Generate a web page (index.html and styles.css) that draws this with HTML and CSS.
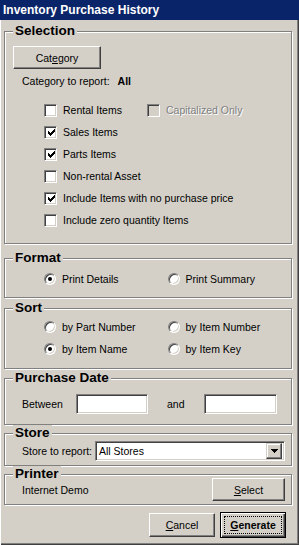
FILE: index.html
```html
<!DOCTYPE html>
<html lang="en">
<head>
  <meta charset="UTF-8" />
  <title>Inventory Purchase History</title>
  <link rel="stylesheet" href="styles.css">
</head>
<body>

  <div class="window">
    <div class="titlebar">Inventory Purchase History</div>

    <div class="content">
      <fieldset class="group group-selection">
        <legend>Selection</legend>
        <button class="btn btn-category">Cat<u>e</u>gory</button>
        <div class="cat-line"><span>Category to report:</span><b>All</b></div>

        <div class="checks">
          <div class="row">
            <span class="chk"></span><span class="lbl lbl-rental">Rental Items</span>
            <span class="chk disabled"></span><span class="lbl lbl-disabled">Capitalized Only</span>
          </div>
          <div class="row">
            <span class="chk"><svg width="7" height="7" viewBox="0 0 7 7"><path d="M0 2V5H1V6H2V7H3V6H4V5H5V4H6V3H7V0H6V1H5V2H4V3H3V4H2V3H1V2Z"/></svg></span><span class="lbl">Sales Items</span>
          </div>
          <div class="row">
            <span class="chk"><svg width="7" height="7" viewBox="0 0 7 7"><path d="M0 2V5H1V6H2V7H3V6H4V5H5V4H6V3H7V0H6V1H5V2H4V3H3V4H2V3H1V2Z"/></svg></span><span class="lbl">Parts Items</span>
          </div>
          <div class="row">
            <span class="chk"></span><span class="lbl">Non-rental Asset</span>
          </div>
          <div class="row">
            <span class="chk"><svg width="7" height="7" viewBox="0 0 7 7"><path d="M0 2V5H1V6H2V7H3V6H4V5H5V4H6V3H7V0H6V1H5V2H4V3H3V4H2V3H1V2Z"/></svg></span><span class="lbl">Include Items with no purchase price</span>
          </div>
          <div class="row">
            <span class="chk"></span><span class="lbl">Include zero quantity Items</span>
          </div>
        </div>
      </fieldset>

      <fieldset class="group group-format">
        <legend>Format</legend>
        <div class="radio-row">
          <div class="radio-cell"><span class="radio on"></span><span class="lbl">Print Details</span></div>
          <div class="radio-cell"><span class="radio"></span><span class="lbl">Print Summary</span></div>
        </div>
      </fieldset>

      <fieldset class="group group-sort">
        <legend>Sort</legend>
        <div class="radio-row">
          <div class="radio-cell"><span class="radio"></span><span class="lbl">by Part Number</span></div>
          <div class="radio-cell"><span class="radio"></span><span class="lbl">by Item Number</span></div>
        </div>
        <div class="radio-row">
          <div class="radio-cell"><span class="radio on"></span><span class="lbl">by Item Name</span></div>
          <div class="radio-cell"><span class="radio"></span><span class="lbl">by Item Key</span></div>
        </div>
      </fieldset>

      <fieldset class="group group-date">
        <legend>Purchase Date</legend>
        <div class="date-row">
          <span class="date-label">Between</span>
          <input type="text" class="field date-from">
          <span class="and-label">and</span>
          <input type="text" class="field date-to">
        </div>
      </fieldset>

      <fieldset class="group group-store">
        <legend>Store</legend>
        <div class="store-row">
          <span class="store-label">Store to report:</span>
          <div class="select">
            <span class="select-text">All Stores</span>
            <span class="select-btn"><svg width="7" height="4" viewBox="0 0 7 4"><path d="M0 0H7V1H6V2H5V3H4V4H3V3H2V2H1V1H0Z"/></svg></span>
          </div>
        </div>
      </fieldset>

      <fieldset class="group group-printer">
        <legend>Printer</legend>
        <div class="printer-row">
          <span>Internet Demo</span>
          <button class="btn btn-select"><u>S</u>elect</button>
        </div>
      </fieldset>

      <div class="footer">
        <button class="btn btn-cancel"><u>C</u>ancel</button>
        <button class="btn btn-generate"><u>G</u>enerate</button>
      </div>
    </div>
  </div>

</body>
</html>
```

FILE: styles.css
```css
:root {
  --face: #d4d0c8;
  --shadow: #808080;
  --dark: #404040;
  --light: #fff;
}

* {
  box-sizing: border-box;
}

body {
  margin: 0;
  background: var(--face);
  font-family: "Liberation Sans", Arial, sans-serif;
  font-size: 10.5px;
  color: #000;
}

.window {
  width: 299px;
  height: 545px;
  box-shadow: inset 1px 0 0 var(--light), inset -1px -1px 0 var(--dark), inset -2px -2px 0 var(--shadow);
}

.titlebar {
  height: 20px;
  line-height: 20px;
  padding-left: 3px;
  background: #0a246a;
  color: #fff;
  font-weight: bold;
  font-size: 12px;
}

.content {
  padding: 3px 0 0 4px;
}

/* group boxes */
.group {
  width: 288px;
  margin: 0;
  padding: 0;
  min-inline-size: 0;
  border: 1px solid var(--shadow);
  box-shadow: 1px 1px 0 var(--light), inset 1px 1px 0 var(--light);
}

.group legend {
  margin-left: 8px;
  padding: 0 2px;
  font-weight: bold;
  font-size: 13.5px;
  line-height: 16px;
  background: var(--face);
}

.group-selection { padding-bottom: 12px; }
.group-format { margin-top: 6px; padding: 2px 0 7px; }
.group-sort { margin-top: 2px; padding-bottom: 8px; }
.group-date { margin-top: 1px; padding-bottom: 10px; }
.group-store { padding-bottom: 4px; }
.group-printer { padding-bottom: 3px; }

/* buttons */
.btn {
  display: flex;
  align-items: center;
  justify-content: center;
  margin: 0;
  padding: 0;
  font: inherit;
  color: #000;
  background: var(--face);
  border: 1px solid;
  border-color: var(--light) var(--dark) var(--dark) var(--light);
  box-shadow: inset -1px -1px 0 var(--shadow), inset 1px 1px 0 var(--face);
}

.btn u {
  text-decoration-thickness: 1px;
  text-underline-offset: 1px;
}

.btn-category {
  width: 88px;
  height: 23px;
  margin: 7px 0 0 8px;
}

.cat-line {
  display: flex;
  gap: 8px;
  height: 13px;
  line-height: 13px;
  margin-top: 6px;
  padding-left: 17px;
}

/* check boxes */
.checks {
  margin-top: 11px;
}

.row {
  display: flex;
  align-items: center;
  height: 22px;
  padding-left: 39px;
}

.chk {
  display: flex;
  align-items: center;
  justify-content: center;
  width: 13px;
  height: 13px;
  flex: none;
  background: #fff;
  border: 1px solid;
  border-color: var(--shadow) var(--light) var(--light) var(--shadow);
  box-shadow: inset 1px 1px 0 var(--dark), inset -1px -1px 0 var(--face);
}

.chk svg {
  margin: 1px 0 0 1px;
}

.chk.disabled {
  background: var(--face);
}

.lbl {
  margin-left: 6px;
  white-space: nowrap;
}

.lbl-rental {
  width: 84px;
}

.lbl-disabled {
  color: var(--shadow);
  text-shadow: 1px 1px 0 var(--light);
}

/* radios */
.radio-row {
  display: flex;
  align-items: center;
  height: 22px;
  padding-left: 39px;
}

.radio-cell {
  display: flex;
  align-items: center;
  width: 128px;
}

.radio {
  display: flex;
  align-items: center;
  justify-content: center;
  width: 12px;
  height: 12px;
  flex: none;
  border-radius: 50%;
  background: #fff;
  border: 1px solid;
  border-color: var(--shadow) var(--light) var(--light) var(--shadow);
  box-shadow: inset 1px 1px 0 var(--dark), inset -1px -1px 0 var(--face);
}

.radio.on::after {
  content: "";
  width: 4px;
  height: 4px;
  border-radius: 50%;
  background: #000;
}

/* fields */
.field {
  height: 20px;
  margin: 0;
  padding: 0 2px;
  font: inherit;
  background: #fff;
  border: 1px solid;
  border-color: var(--shadow) var(--light) var(--light) var(--shadow);
  box-shadow: inset 1px 1px 0 var(--dark), inset -1px -1px 0 var(--face);
  outline: none;
}

.date-row {
  display: flex;
  align-items: center;
  height: 20px;
  margin-top: 8px;
  padding-left: 17px;
}

.date-label { width: 54px; }
.date-from { width: 72px; }
.and-label { width: 37px; margin-left: 19px; }
.date-to { width: 73px; }

.store-row {
  display: flex;
  align-items: center;
  padding-left: 17px;
}

.store-label {
  width: 73px;
  white-space: nowrap;
}

.select {
  display: flex;
  align-items: center;
  width: 190px;
  height: 20px;
  padding: 2px;
  background: #fff;
  border: 1px solid;
  border-color: var(--shadow) var(--light) var(--light) var(--shadow);
  box-shadow: inset 1px 1px 0 var(--dark), inset -1px -1px 0 var(--face);
}

.select-text {
  flex: 1;
  padding-left: 1px;
}

.select-btn {
  display: flex;
  align-items: center;
  justify-content: center;
  width: 16px;
  height: 16px;
  background: var(--face);
  border: 1px solid;
  border-color: var(--face) var(--dark) var(--dark) var(--face);
  box-shadow: inset -1px -1px 0 var(--shadow), inset 1px 1px 0 var(--light);
}

.printer-row {
  display: flex;
  align-items: center;
  height: 23px;
  margin-top: -4px;
  padding: 0 6px 0 17px;
}

.btn-select {
  width: 73px;
  height: 23px;
  margin-left: auto;
}

.footer {
  display: flex;
  justify-content: flex-end;
  align-items: center;
  gap: 5px;
  height: 26px;
  margin-top: 7px;
  padding-right: 13px;
}

.btn-cancel {
  width: 66px;
  height: 24px;
}

.btn-generate {
  width: 66px;
  height: 26px;
  font-weight: bold;
  border-color: #000;
  box-shadow: inset 1px 1px 0 var(--light), inset -1px -1px 0 var(--dark), inset -2px -2px 0 var(--shadow);
  outline: 1px dotted #000;
  outline-offset: -5px;
}
```
